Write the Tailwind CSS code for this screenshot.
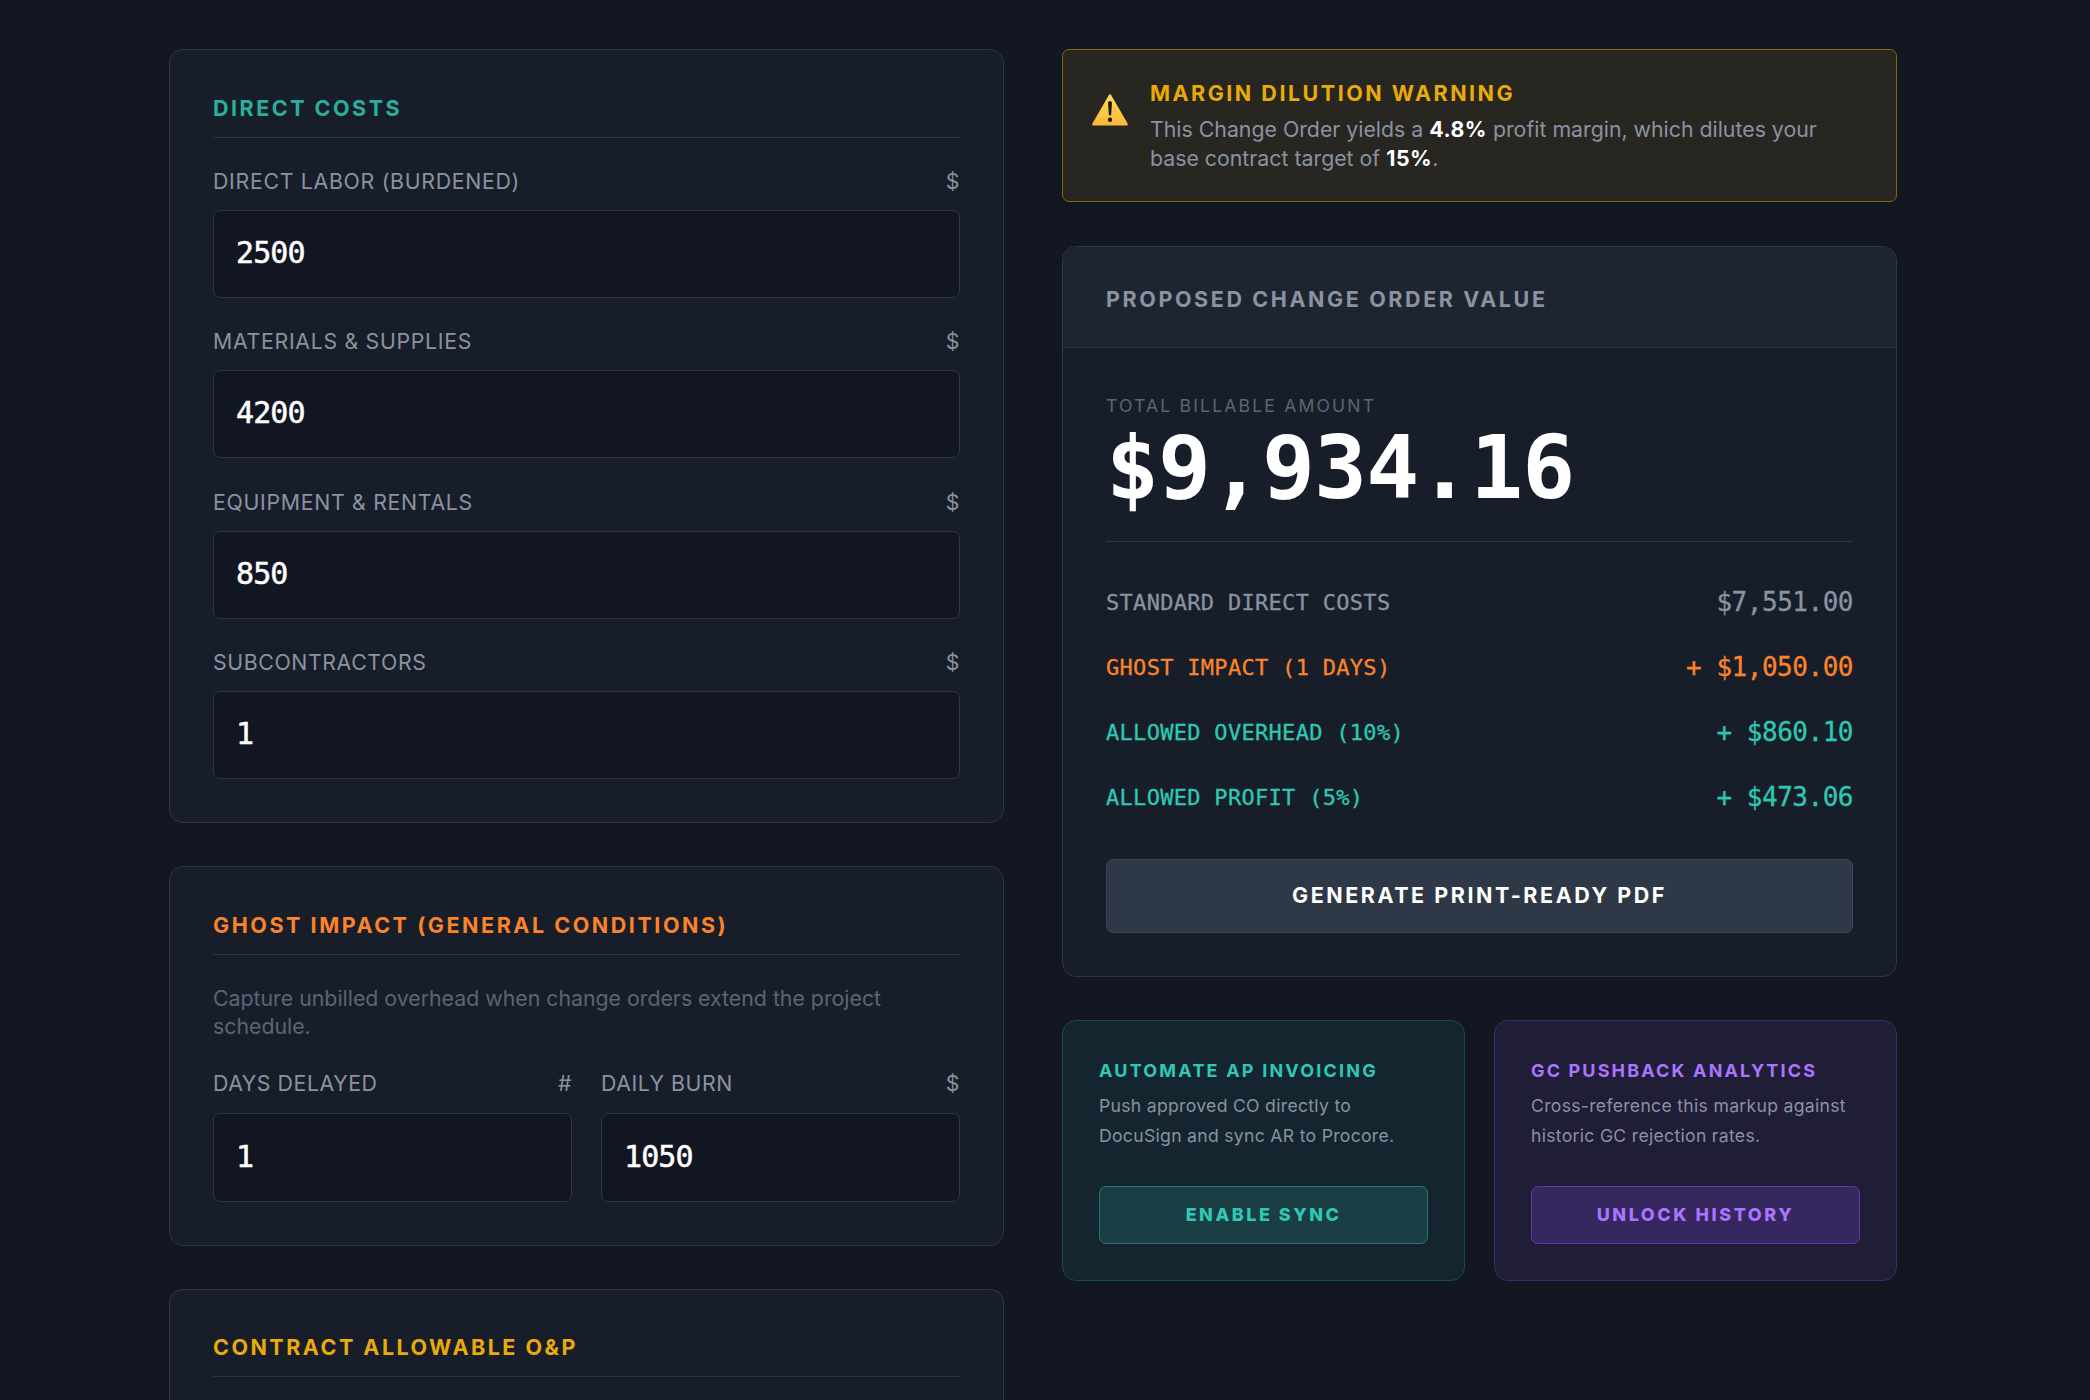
<!DOCTYPE html>
<html lang="en">
<head>
  <meta charset="UTF-8">
  <title>Change Order Calculator</title>
  <meta name="viewport" content="width=device-width, initial-scale=1.0">
  <script src="https://cdn.jsdelivr.net/npm/@tailwindcss/browser@4"></script>
</head>
<body class="bg-[#121722] text-white font-['Inter',sans-serif]">

  <main class="ml-[169px] pt-[49px] w-[1728px] h-[1400px] overflow-hidden grid grid-cols-2 gap-[58px] items-start">

    <!-- Inputs -->
    <div class="flex flex-col gap-[43px]">

      <section class="h-[774px] rounded-[14px] border border-[#2e3644] bg-[#181e29] p-[43px]">
        <h2 class="h-[45px] pt-px border-b border-[#2e3644] text-[21.5px] leading-[28px] font-bold tracking-[2.5px] text-[#28b09d]">DIRECT COSTS</h2>
        <div class="mt-[28px] flex flex-col gap-[28.3px]">
          <div>
            <label for="labor" class="flex justify-between h-[44px] pt-px text-[21.3px] leading-[29px] font-[430] tracking-[0.7px] text-[#8b92a1]"><span>DIRECT LABOR (BURDENED)</span><span>$</span></label>
            <input id="labor" type="text" value="2500" class="block w-full h-[88px] px-[22px] pb-[3px] rounded-[7px] border border-[#2e3644] bg-[#121622] font-['DejaVu_Sans_Mono',monospace] text-[30px] tracking-[-0.9px] text-white [-webkit-text-stroke:0.5px]">
          </div>
          <div>
            <label for="materials" class="flex justify-between h-[44px] pt-px text-[21.3px] leading-[29px] font-[430] tracking-[0.7px] text-[#8b92a1]"><span>MATERIALS &amp; SUPPLIES</span><span>$</span></label>
            <input id="materials" type="text" value="4200" class="block w-full h-[88px] px-[22px] pb-[3px] rounded-[7px] border border-[#2e3644] bg-[#121622] font-['DejaVu_Sans_Mono',monospace] text-[30px] tracking-[-0.9px] text-white [-webkit-text-stroke:0.5px]">
          </div>
          <div>
            <label for="equipment" class="flex justify-between h-[44px] pt-px text-[21.3px] leading-[29px] font-[430] tracking-[0.7px] text-[#8b92a1]"><span>EQUIPMENT &amp; RENTALS</span><span>$</span></label>
            <input id="equipment" type="text" value="850" class="block w-full h-[88px] px-[22px] pb-[3px] rounded-[7px] border border-[#2e3644] bg-[#121622] font-['DejaVu_Sans_Mono',monospace] text-[30px] tracking-[-0.9px] text-white [-webkit-text-stroke:0.5px]">
          </div>
          <div>
            <label for="subs" class="flex justify-between h-[44px] pt-px text-[21.3px] leading-[29px] font-[430] tracking-[0.6px] text-[#8b92a1]"><span>SUBCONTRACTORS</span><span>$</span></label>
            <input id="subs" type="text" value="1" class="block w-full h-[88px] px-[22px] pb-[3px] rounded-[7px] border border-[#2e3644] bg-[#121622] font-['DejaVu_Sans_Mono',monospace] text-[30px] tracking-[-0.9px] text-white [-webkit-text-stroke:0.5px]">
          </div>
        </div>
      </section>

      <section class="h-[380px] rounded-[14px] border border-[#2e3644] bg-[#181e29] p-[43px]">
        <h2 class="h-[45px] pt-px border-b border-[#2e3644] text-[21.5px] leading-[28px] font-bold tracking-[2.55px] text-[#fb8429]">GHOST IMPACT (GENERAL CONDITIONS)</h2>
        <p class="mt-[29px] w-[700px] text-[21.3px] leading-[28px] font-[430] text-[#5d6474]">Capture unbilled overhead when change orders extend the project schedule.</p>
        <div class="mt-[29px] grid grid-cols-2 gap-[29px]">
          <div>
            <label for="days" class="flex justify-between h-[44px] text-[21.3px] leading-[29px] font-[430] tracking-[0.55px] text-[#8b92a1]"><span>DAYS DELAYED</span><span>#</span></label>
            <input id="days" type="text" value="1" class="block w-full h-[89px] px-[22px] pb-[3px] rounded-[7px] border border-[#2e3644] bg-[#121622] font-['DejaVu_Sans_Mono',monospace] text-[30px] tracking-[-0.9px] text-white [-webkit-text-stroke:0.5px]">
          </div>
          <div>
            <label for="burn" class="flex justify-between h-[44px] text-[21.3px] leading-[29px] font-[430] tracking-[0.55px] text-[#8b92a1]"><span>DAILY BURN</span><span>$</span></label>
            <input id="burn" type="text" value="1050" class="block w-full h-[89px] px-[22px] pb-[3px] rounded-[7px] border border-[#2e3644] bg-[#121622] font-['DejaVu_Sans_Mono',monospace] text-[30px] tracking-[-0.9px] text-white [-webkit-text-stroke:0.5px]">
          </div>
        </div>
      </section>

      <section class="h-[111px] rounded-t-[14px] border border-b-0 border-[#2e3644] bg-[#181e29] px-[43px] pt-[43px]">
        <h2 class="h-[44px] border-b border-[#2e3644] text-[21.5px] leading-[28px] font-bold tracking-[2.5px] text-[#eaab08]">CONTRACT ALLOWABLE O&amp;P</h2>
      </section>
    </div>

    <!-- Results -->
    <div class="flex flex-col">

      <div class="h-[153px] flex gap-[22px] rounded-[7px] border border-[#856412] bg-[#282621] pl-[29px] pt-[29px]">
        <svg class="mt-[15px] w-9 h-8 shrink-0" viewBox="0 0 36 32">
          <defs>
            <linearGradient id="warn" x1="0" y1="0" x2="0" y2="1">
              <stop offset="0" stop-color="#ffdc55"/>
              <stop offset="1" stop-color="#fbb836"/>
            </linearGradient>
          </defs>
          <path d="M16.8 1.2Q18 -.6 19.2 1.2L35.6 29.6Q36.4 31.6 34.4 31.6H1.6Q-.4 31.6 .4 29.6Z" fill="url(#warn)"/>
          <path d="M16 8.6Q16 7.2 18 7.2T20 8.6L19.2 20.6Q19 21.6 18 21.6T16.8 20.6Z" fill="#1c1a10"/>
          <circle cx="18" cy="25.8" r="2.2" fill="#1c1a10"/>
        </svg>
        <div>
          <h3 class="text-[21.5px] leading-[29px] font-bold tracking-[2.5px] text-[#eaab08]">MARGIN DILUTION WARNING</h3>
          <p class="mt-[7px] w-[700px] text-[21.3px] leading-[29px] font-[430] text-[#8b92a1]">This Change Order yields a <strong class="font-bold text-white tracking-[0.5px]">4.8%</strong> profit margin, which dilutes your base contract target of <strong class="font-bold text-white tracking-[0.5px]">15%</strong>.</p>
        </div>
      </div>

      <section class="mt-[44px] h-[731px] rounded-[14px] border border-[#2e3644] bg-[#181e29] overflow-hidden">
        <div class="h-[101px] px-[43px] flex items-center border-b border-[#2e3644] bg-[#1f2530]">
          <h2 class="pt-[4px] text-[21.5px] leading-[28px] font-bold tracking-[2.6px] text-[#8b92a1]">PROPOSED CHANGE ORDER VALUE</h2>
        </div>
        <div class="px-[43px] pt-[43px]">
          <div class="h-[151px] border-b border-[#2e3644]">
            <p class="pt-[2px] text-[17.6px] leading-[26px] tracking-[2.15px] text-[#5d6474]">TOTAL BILLABLE AMOUNT</p>
            <p class="mt-[5px] font-['DejaVu_Sans_Mono',monospace] text-[88px] leading-[88px] font-bold tracking-[-0.95px]">$9,934.16</p>
          </div>
          <div class="mt-[42px] flex flex-col gap-[29px] font-['DejaVu_Sans_Mono',monospace] [-webkit-text-stroke:0.3px]">
            <div class="h-9 flex justify-between items-center text-[#8b92a1]"><span class="text-[22px] tracking-[0.3px]">STANDARD DIRECT COSTS</span><span class="text-[26px] tracking-[-0.48px]">$7,551.00</span></div>
            <div class="h-9 flex justify-between items-center text-[#fb8429]"><span class="text-[22px] tracking-[0.3px]">GHOST IMPACT (1 DAYS)</span><span class="text-[26px] tracking-[-0.48px]">+ $1,050.00</span></div>
            <div class="h-9 flex justify-between items-center text-[#2dc9b4]"><span class="text-[22px] tracking-[0.3px]">ALLOWED OVERHEAD (10%)</span><span class="text-[26px] tracking-[-0.48px]">+ $860.10</span></div>
            <div class="h-9 flex justify-between items-center text-[#2dc9b4]"><span class="text-[22px] tracking-[0.3px]">ALLOWED PROFIT (5%)</span><span class="text-[26px] tracking-[-0.48px]">+ $473.06</span></div>
          </div>
          <button class="mt-[44px] w-full h-[74px] pb-[2px] rounded-[7px] border border-[#3e4757] bg-[#2f3847] text-[21.5px] font-bold tracking-[2.55px]">GENERATE PRINT-READY PDF</button>
        </div>
      </section>

      <div class="mt-[43px] grid grid-cols-2 gap-[29px]">
        <div class="h-[261px] rounded-[14px] border border-[#1a4a4b] bg-[#15252f] px-[36px] pt-[36px]">
          <h3 class="text-[18px] leading-[27px] font-bold tracking-[2.2px] text-[#2dc9b4]">AUTOMATE AP INVOICING</h3>
          <p class="mt-[7px] h-[60px] text-[17.6px] leading-[30px] font-[430] tracking-[0.3px] text-[#8b92a1]">Push approved CO directly to<br>DocuSign and sync AR to Procore.</p>
          <button class="mt-[35px] w-full h-[58px] pb-px rounded-[7px] border border-[#21796f] bg-[#1a3e44] text-[18px] font-extrabold tracking-[2.5px] text-[#2dc9b4]">ENABLE SYNC</button>
        </div>
        <div class="h-[261px] rounded-[14px] border border-[#40286c] bg-[#201d37] px-[36px] pt-[36px]">
          <h3 class="text-[18px] leading-[27px] font-bold tracking-[2.15px] text-[#ab74ff]">GC PUSHBACK ANALYTICS</h3>
          <p class="mt-[7px] h-[60px] text-[17.6px] leading-[30px] font-[430] tracking-[0.3px] text-[#8b92a1]">Cross-reference this markup against<br>historic GC rejection rates.</p>
          <button class="mt-[35px] w-full h-[58px] pb-px rounded-[7px] border border-[#6336a6] bg-[#36275e] text-[18px] font-extrabold tracking-[2.55px] text-[#ab74ff]">UNLOCK HISTORY</button>
        </div>
      </div>
    </div>
  </main>

</body>
</html>
